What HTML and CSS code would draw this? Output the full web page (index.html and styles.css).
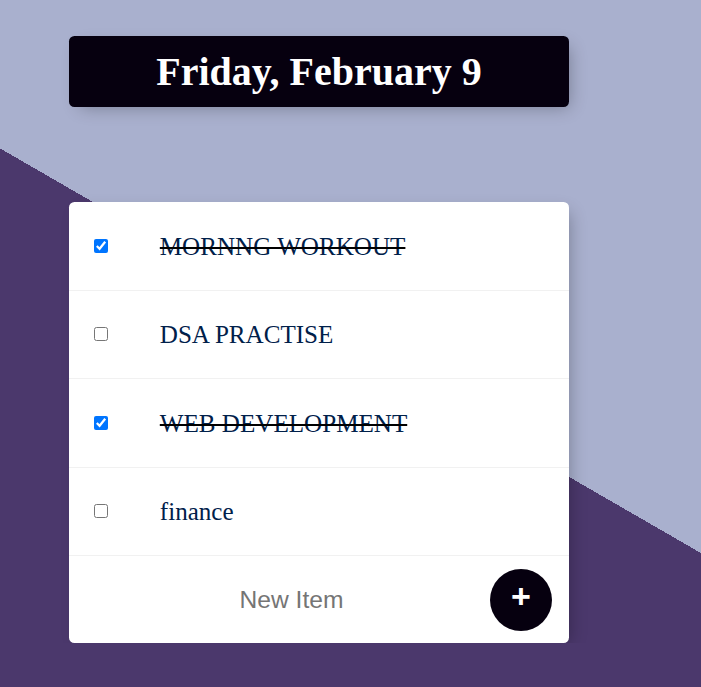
FILE: index.html
```html
<!DOCTYPE html>
<html lang="en">
<head>
<meta charset="utf-8">
<title>To-Do List</title>
<link rel="stylesheet" href="styles.css">
</head>
<body>
<main class="page">
  <header class="heading">
    <h1>Friday, February 9</h1>
  </header>
  <section class="card">
    <div class="item">
      <input class="check" type="checkbox" checked>
      <p class="label done">MORNNG WORKOUT</p>
    </div>
    <div class="item">
      <input class="check" type="checkbox">
      <p class="label">DSA PRACTISE</p>
    </div>
    <div class="item">
      <input class="check" type="checkbox" checked>
      <p class="label done">WEB DEVELOPMENT</p>
    </div>
    <div class="item">
      <input class="check" type="checkbox">
      <p class="label">finance</p>
    </div>
    <form class="new-item">
      <input class="new-input" type="text" name="newItem" placeholder="New Item" autocomplete="off">
      <button class="add-btn" type="button">+</button>
    </form>
  </section>
</main>
</body>
</html>
```
FILE: styles.css
```css
html {
  height: 100%;
  background: linear-gradient(210deg, #A9B0CE 479px, #4B386C 479px);
}

body {
  margin: 0;
  font-family: "Liberation Serif", "Times New Roman", serif;
}

.page {
  padding: 36px 0 0 69px;
  width: 500px;
}

.heading {
  height: 71px;
  background: #06000F;
  border-radius: 5.5px;
  box-shadow: 5.5px 5.5px 16.5px -5.5px rgba(0, 0, 0, 0.3);
  display: flex;
  align-items: center;
  justify-content: center;
}

.heading h1 {
  margin: 0;
  color: #fff;
  font-size: 40px;
  font-weight: bold;
  line-height: normal;
}

.card {
  margin-top: 95px;
  background: #fff;
  border-radius: 5.5px;
  box-shadow: 5.5px 5.5px 16.5px -5.5px rgba(0, 0, 0, 0.3);
}

.item {
  box-sizing: border-box;
  height: 88.5px;
  display: flex;
  align-items: center;
  border-bottom: 1px solid #F1F1F1;
}

.check {
  width: 14.3px;
  height: 14.3px;
  margin: 0 0 0 24.5px;
}

.label {
  margin: 0 0 0 52px;
  padding-top: 2px;
  font-size: 25.1px;
  color: #00204A;
  line-height: normal;
}

.label.done {
  text-decoration: line-through;
  text-decoration-color: #000;
  text-decoration-thickness: 2px;
}

.new-item {
  height: 87px;
  display: flex;
  align-items: center;
  margin: 0;
}

.new-input {
  box-sizing: border-box;
  width: 421px;
  height: 60px;
  padding: 0 0 0 24px;
  border: none;
  outline: none;
  background: transparent;
  text-align: center;
  font-family: "Liberation Sans", Arial, sans-serif;
  font-size: 24.64px;
  color: #333;
}

.new-input::placeholder {
  color: #757575;
}

.add-btn {
  width: 62px;
  height: 62px;
  margin-left: auto;
  margin-right: 17px;
  padding: 0 0 8px 0;
  border: none;
  border-radius: 50%;
  background: #06000F;
  color: #fff;
  font-family: "Liberation Sans", Arial, sans-serif;
  font-size: 34px;
  font-weight: bold;
  line-height: 1;
  display: flex;
  align-items: center;
  justify-content: center;
}
```
